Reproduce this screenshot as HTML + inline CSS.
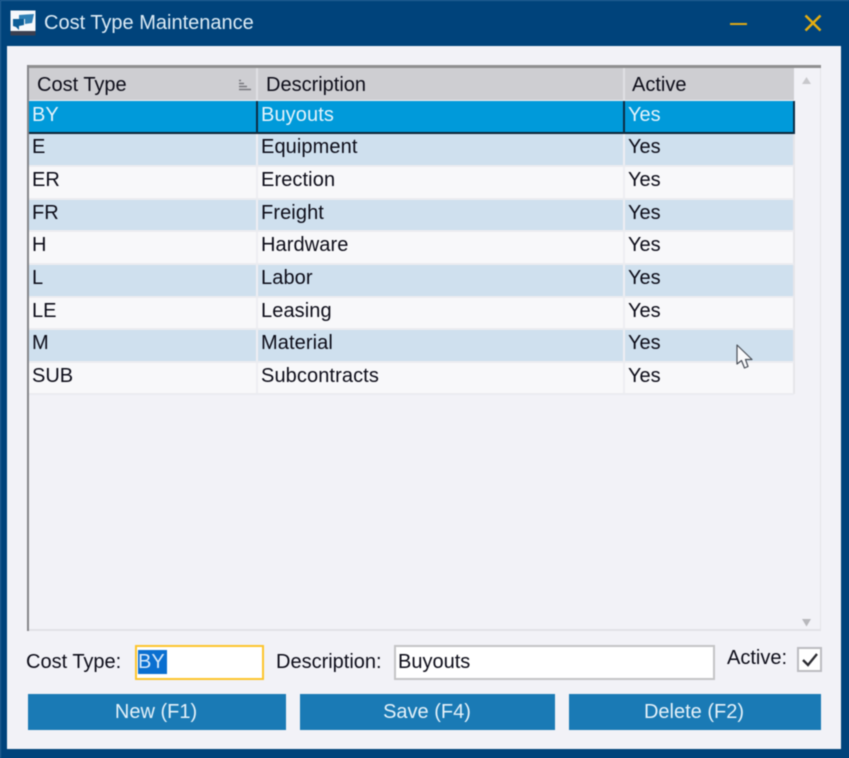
<!DOCTYPE html>
<html><head><meta charset="utf-8">
<style>
html,body{margin:0;padding:0;}
body{width:849px;height:758px;position:relative;overflow:hidden;background:#00437b;font-family:"Liberation Sans",sans-serif;font-size:20px;color:#0c0c18;}
div,span{position:absolute;white-space:nowrap;box-sizing:border-box;}
#w{left:0;top:0;width:849px;height:758px;filter:blur(.4px);background:#00437b;}
.t{line-height:24px;height:24px;}
.d{letter-spacing:.1px;left:261px;}
.row{left:29px;width:765px;height:33px;}
.odd{background:#cfe0ee;}
.even{background:#f8f8fa;}
.sep{width:2px;background:#eeeef2;}
.hl{left:29px;width:765px;height:2px;background:#ebecf0;}
.btn{top:694px;height:36px;background:#1a7ab5;color:#e4f1f9;text-align:center;line-height:37px;}
</style></head><body>
<div id="w">
<div style="left:0;top:0;width:849px;height:1px;background:#2a6497"></div>
<div style="left:0;top:0;width:1px;height:758px;background:#2a6497"></div>
<div style="left:7px;top:46px;width:834px;height:703px;background:#f2f2f7"></div>

<svg style="position:absolute;left:10px;top:10px" width="26" height="26" viewBox="0 0 26 26">
<rect x="0.5" y="0.500" width="25" height="21" fill="#f6f8fb"/>
<rect x="0.5" y="21" width="25" height="4.500" fill="#3a3f50"/>
<path d="M9 5 L24 4 L22 13 L15 14 L15 9 L9 9 Z" fill="#2f7fb5"/>
<path d="M3 9 L14 9 L14 15 L9 16 L9 20 L6 17 L3 16 Z" fill="#0c5d96"/>
</svg>
<div class="t" style="left:44px;top:11px;color:#dcebf5">Cost Type Maintenance</div>
<div style="left:730px;top:23px;width:17px;height:2px;background:#e0a915"></div>
<svg style="position:absolute;left:804px;top:14px" width="18" height="18" viewBox="0 0 18 18"><path d="M1.500 1.500 L16.500 16.500 M16.500 1.500 L1.500 16.500" stroke="#e5ad10" stroke-width="2.500" fill="none"/></svg>

<!-- grid frame -->
<div style="left:27px;top:66px;width:794px;height:565px;background:#f2f2f7;border-right:1px solid #e4e4e8;border-bottom:2px solid #e2e2e6"></div>
<div style="left:27px;top:65px;width:794px;height:3px;background:#8f8f90"></div>
<div style="left:27px;top:65px;width:2px;height:566px;background:#85858a"></div>

<!-- header -->
<div style="left:29px;top:68px;width:765px;height:32px;background:#ceced2"></div>
<div style="left:256px;top:68px;width:2px;height:32px;background:#e0e0e4"></div>
<div style="left:623px;top:68px;width:2px;height:32px;background:#e0e0e4"></div>
<div style="left:29px;top:100px;width:765px;height:1px;background:#eeeef2"></div>
<div class="t" style="left:37px;top:73px">Cost Type</div>
<div class="t" style="left:266px;top:73px">Description</div>
<div class="t" style="left:632px;top:73px">Active</div>
<svg style="position:absolute;left:238px;top:79px" width="14" height="12" viewBox="0 0 14 12"><path d="M1 1.500H3M1 4.500H6M1 7.500H9M1 10.500H13" stroke="#77777d" stroke-width="1.500" fill="none"/></svg>

<!-- rows -->
<div class="row" style="top:101px;background:#009ada;height:33px"></div>
<div class="row odd" style="top:134px;height:32px"></div>
<div class="row even" style="top:166px"></div>
<div class="row odd" style="top:199px"></div>
<div class="row even" style="top:232px"></div>
<div class="row odd" style="top:264px"></div>
<div class="row even" style="top:297px"></div>
<div class="row odd" style="top:329px"></div>
<div class="row even" style="top:362px;height:31px"></div>
<div class="sep" style="left:256px;top:134px;height:259px"></div>
<div class="sep" style="left:623px;top:134px;height:259px"></div>
<div style="left:793px;top:134px;width:2px;height:260px;background:#e6e6ea"></div>
<div class="hl" style="top:165px"></div>
<div class="hl" style="top:198px"></div>
<div class="hl" style="top:230px"></div>
<div class="hl" style="top:263px"></div>
<div class="hl" style="top:296px"></div>
<div class="hl" style="top:328px"></div>
<div class="hl" style="top:361px"></div>
<div class="hl" style="top:393px"></div>

<!-- selection outline -->
<div style="left:29px;top:132px;width:766px;height:2px;background:#0c2436"></div>
<div style="left:256px;top:101px;width:2px;height:32px;background:#0c2e46"></div>
<div style="left:623px;top:101px;width:2px;height:32px;background:#0c2e46"></div>
<div style="left:793px;top:101px;width:2px;height:33px;background:#0c2e46"></div>

<div class="t" style="left:32px;top:103px;color:#e4f3fb">BY</div>
<div class="t d" style="top:103px;color:#e4f3fb">Buyouts</div>
<div class="t" style="left:628px;top:103px;color:#e4f3fb">Yes</div>

<div class="t" style="left:32px;top:135px">E</div>
<div class="t d" style="top:135px">Equipment</div>
<div class="t" style="left:628px;top:135px">Yes</div>

<div class="t" style="left:32px;top:168px">ER</div>
<div class="t d" style="top:168px">Erection</div>
<div class="t" style="left:628px;top:168px">Yes</div>

<div class="t" style="left:32px;top:201px">FR</div>
<div class="t d" style="top:201px">Freight</div>
<div class="t" style="left:628px;top:201px">Yes</div>

<div class="t" style="left:32px;top:233px">H</div>
<div class="t d" style="top:233px">Hardware</div>
<div class="t" style="left:628px;top:233px">Yes</div>

<div class="t" style="left:32px;top:266px">L</div>
<div class="t d" style="top:266px">Labor</div>
<div class="t" style="left:628px;top:266px">Yes</div>

<div class="t" style="left:32px;top:299px">LE</div>
<div class="t d" style="top:299px">Leasing</div>
<div class="t" style="left:628px;top:299px">Yes</div>

<div class="t" style="left:32px;top:331px">M</div>
<div class="t d" style="top:331px">Material</div>
<div class="t" style="left:628px;top:331px">Yes</div>

<div class="t" style="left:32px;top:364px">SUB</div>
<div class="t d" style="top:364px">Subcontracts</div>
<div class="t" style="left:628px;top:364px">Yes</div>

<!-- scrollbar arrows -->
<svg style="position:absolute;left:801px;top:75px" width="11" height="10" viewBox="0 0 11 10"><path d="M5.500 2 L10 9 H1 Z" fill="#c8c8cc"/></svg>
<svg style="position:absolute;left:801px;top:618px" width="11" height="10" viewBox="0 0 11 10"><path d="M1 1 H10 L5.500 8.500 Z" fill="#b8b8bc"/></svg>

<!-- cursor -->
<svg style="position:absolute;left:736px;top:344px" width="18" height="27" viewBox="0 0 18 27"><path d="M1 1 V20 L5.500 16.500 L8.500 24 L12 22.500 L9.500 15.500 L16 15.500 Z" fill="#fafafc" stroke="#4a4f58" stroke-width="1.200" stroke-linejoin="round"/></svg>

<!-- form -->
<div class="t" style="left:26px;top:650px">Cost Type:</div>
<div style="left:135px;top:645px;width:129px;height:35px;background:#fff;border:2px solid #fdc52c"></div>
<div style="left:138px;top:650px;width:29px;height:24px;background:#0a6fd0"></div>
<div class="t" style="left:138px;top:650px;color:#d6e8fa">BY</div>
<div class="t" style="left:276px;top:650px">Description:</div>
<div style="left:394px;top:645px;width:321px;height:35px;background:#fff;border:2px solid #c4c4c6"></div>
<div class="t" style="left:398px;top:650px">Buyouts</div>
<div class="t" style="left:727px;top:646px">Active:</div>
<div style="left:797px;top:647px;width:25px;height:25px;background:#fff;border:2px solid #bcbcc0"></div>
<svg style="position:absolute;left:797px;top:647px" width="25" height="25" viewBox="0 0 25 25"><path d="M6 13 L11 18 L20 7" stroke="#2a2a30" stroke-width="2.300" fill="none"/></svg>

<!-- buttons -->
<div class="btn" style="left:28px;width:258px;text-indent:-2px">New (F1)</div>
<div class="btn" style="left:300px;width:255px;text-indent:-1px">Save (F4)</div>
<div class="btn" style="left:569px;width:252px;text-indent:-2px">Delete (F2)</div>
</div>
</body></html>
